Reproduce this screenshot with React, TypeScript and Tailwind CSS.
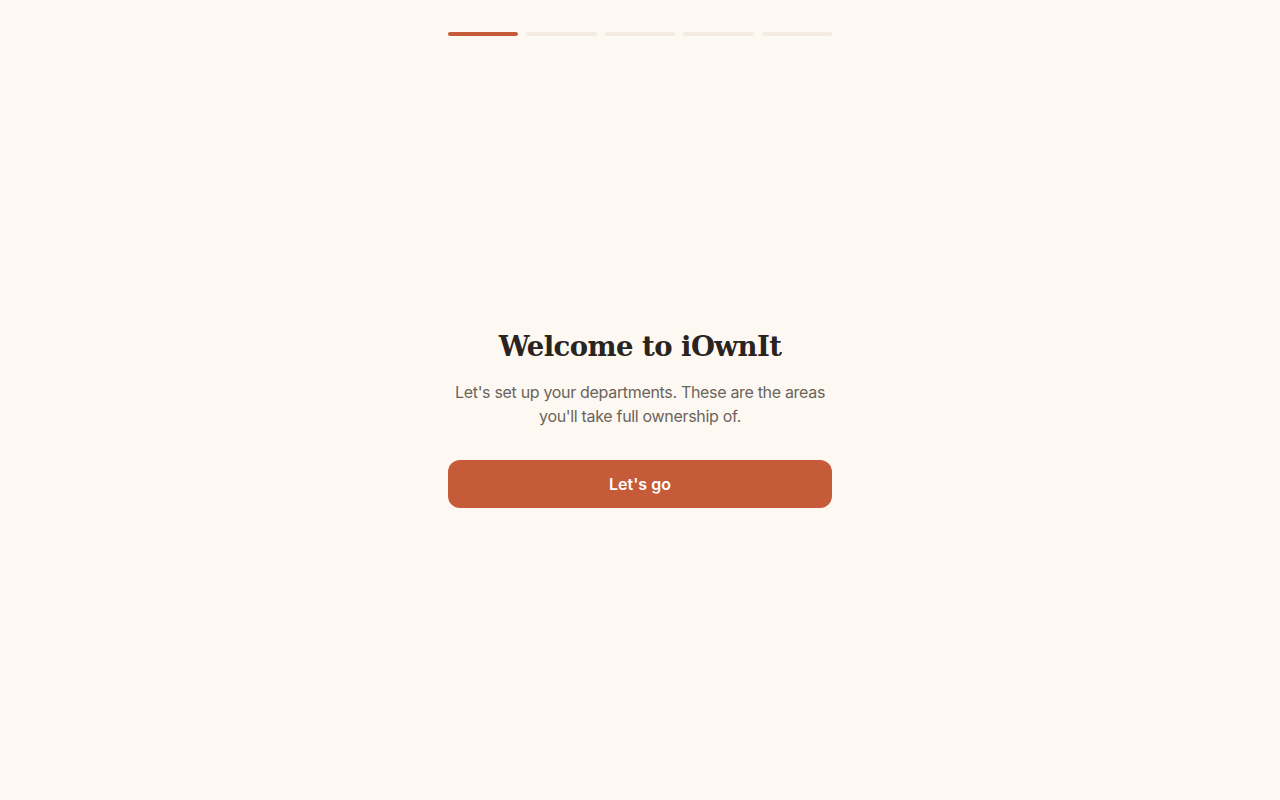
import React from "react";

export default function App() {
  const steps = [0, 1, 2, 3, 4];
  return (
    <div className="min-h-screen w-full bg-[#fdf9f2] flex flex-col" style={{ fontFamily: "Inter, 'DejaVu Sans', sans-serif" }}>
      <div className="pt-8 flex justify-center">
        <div className="w-96 flex gap-2">
          {steps.map((s) => (
            <div
              key={s}
              className={s === 0 ? "flex-1 h-1 rounded-full bg-[#c65b3a]" : "flex-1 h-1 rounded-full bg-[#f4ebe1]"}
            />
          ))}
        </div>
      </div>
      <div className="flex-1 flex items-center justify-center">
        <div className="w-96 flex flex-col items-center text-center">
          <h1 className="text-[27.5px] leading-9 font-bold text-[#2a241f] tracking-[-0.02em]" style={{ fontFamily: "'DejaVu Serif', 'Liberation Serif', serif" }}>
            Welcome to iOwnIt
          </h1>
          <p className="mt-4 text-[16px] leading-6 text-[#6b645d] tracking-[-0.02em]">
            Let's set up your departments. These are the areas you'll take full ownership of.
          </p>
          <button className="mt-8 w-full h-12 rounded-xl bg-[#c65b3a] text-white font-semibold text-[16px]">
            Let's go
          </button>
        </div>
      </div>
    </div>
  );
}
